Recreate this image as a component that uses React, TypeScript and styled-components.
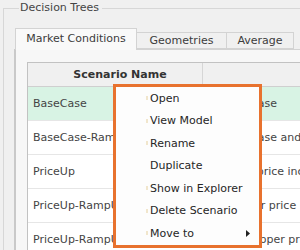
import styled, { createGlobalStyle } from 'styled-components';

const GlobalStyle = createGlobalStyle`
  html, body {
    margin: 0;
    padding: 0;
    background: #f0f0f0;
    overflow: hidden;
  }
  body {
    width: 300px;
    height: 250px;
    font-family: "DejaVu Sans", "Liberation Sans", sans-serif;
    font-size: 10px;
    color: #3a3a3a;
  }
`;

const rows = [
  { name: 'BaseCase', desc: 'Default case', selected: true },
  { name: 'BaseCase-RampUp', desc: 'Default case and ramp up' },
  { name: 'PriceUp', desc: 'Average price increase' },
  { name: 'PriceUp-RampUp', desc: 'Up, higher price' },
  { name: 'PriceUp-RampUp2', desc: 'Ramp, copper price' },
];

const menuItems = [
  { label: 'Open', icon: true },
  { label: 'View Model', icon: true },
  { label: 'Rename', icon: true },
  { label: 'Duplicate' },
  { label: 'Show in Explorer', icon: true },
  { label: 'Delete Scenario', icon: true },
  { label: 'Move to', icon: true, submenu: true },
];

function App() {
  return (
    <Page>
      <GlobalStyle />
      <GroupBox>
        <Legend>Decision Trees</Legend>
        <TabBar>
          <Tab $active>Market Conditions</Tab>
          <Tab $width={91}>Geometries</Tab>
          <Tab $width={68}>Average</Tab>
        </TabBar>
        <Panel>
          <Table>
            <HeaderCell>Scenario Name</HeaderCell>
            <HeaderCell $last />
            {rows.map((r) => (
              <Row key={r.name} $selected={r.selected}>
                <Cell>{r.name}</Cell>
                <Cell>{r.desc}</Cell>
              </Row>
            ))}
          </Table>
        </Panel>
      </GroupBox>

      <Menu>
        {menuItems.map((m) => (
          <MenuItem key={m.label}>
            <IconSlot>{m.icon && <IconMark />}</IconSlot>
            <span>{m.label}</span>
            {m.submenu && (
              <Arrow viewBox="0 0 4 7">
                <path d="M0 0 L4 3.5 L0 7 Z" fill="#222" />
              </Arrow>
            )}
          </MenuItem>
        ))}
      </Menu>
    </Page>
  );
}

export default App;

const Page = styled.div`
  position: relative;
  width: 300px;
  height: 250px;
  overflow: hidden;
`;

const GroupBox = styled.fieldset`
  margin: 0 0 0 3px;
  padding: 0 0 0 10px;
  width: 340px;
  height: 300px;
  border: 1px solid #d7d7d7;
  border-right: none;
  border-bottom: none;
`;

const Legend = styled.legend`
  margin-left: 5px;
  padding: 0 3px 0 1px;
  font-size: 11px;
  line-height: 16px;
  color: #444;
`;

const TabBar = styled.div`
  display: flex;
  align-items: flex-end;
  margin-top: 12px;
  padding-left: 1px;
  position: relative;
  z-index: 1;
`;

const Tab = styled.div<{ $active?: boolean; $width?: number }>`
  box-sizing: border-box;
  width: ${(p) => (p.$active ? 122 : p.$width ?? 80)}px;
  height: ${(p) => (p.$active ? 22 : 17)}px;
  margin-bottom: ${(p) => (p.$active ? -1 : 0)}px;
  border: 1px solid #d3d3d3;
  border-bottom: ${(p) => (p.$active ? 'none' : '1px solid #d3d3d3')};
  margin-left: ${(p) => (p.$active ? 0 : -1)}px;
  background: ${(p) => (p.$active ? '#f9f9f9' : '#f0f0f0')};
  display: flex;
  align-items: center;
  justify-content: center;
  font-size: 11px;
  color: #3c3c3c;
  padding-bottom: ${(p) => (p.$active ? 2 : 0)}px;
`;

const Panel = styled.div`
  box-sizing: border-box;
  height: 260px;
  border-top: 1px solid #d3d3d3;
  border-left: 2px solid #c9c9c9;
  background: #f7f7f7;
  padding: 12px 0 0 11px;
`;

const Table = styled.div`
  display: grid;
  grid-template-columns: 175px 200px;
  grid-auto-rows: 34px;
  grid-template-rows: 24px;
  border: 1px solid #c2c2c2;
  border-right: none;
  background: #fff;
`;

const HeaderCell = styled.div<{ $last?: boolean }>`
  background: #f0f0f0;
  border-bottom: 1px solid #cfcfcf;
  border-right: ${(p) => (p.$last ? 'none' : '1px solid #d6d6d6')};
  display: flex;
  align-items: center;
  justify-content: center;
  padding-left: 10px;
  font-weight: bold;
  font-size: 11px;
  color: #333;
`;

const Row = styled.div<{ $selected?: boolean }>`
  display: contents;
  & > div {
    background: ${(p) => (p.$selected ? '#d8f3e4' : '#fff')};
  }
`;

const Cell = styled.div`
  display: flex;
  align-items: center;
  padding-left: 5px;
  border-bottom: 1px solid #e6e6e6;
  white-space: nowrap;
  overflow: hidden;
  font-size: 11px;
  color: #444;
`;

const Menu = styled.div`
  position: absolute;
  left: 113px;
  top: 84px;
  width: 143px;
  box-sizing: content-box;
  border: 3px solid #e8722e;
  background: #fdfdfd;
  display: flex;
  flex-direction: column;
  height: 158px;
`;

const MenuItem = styled.div`
  display: flex;
  align-items: center;
  height: 22.5px;
  font-size: 11px;
  color: #262626;
  position: relative;
`;

const IconSlot = styled.div`
  width: 34px;
  height: 10px;
  display: flex;
  justify-content: flex-end;
  align-items: center;
`;

const IconMark = styled.div`
  width: 2px;
  height: 4px;
  margin-right: 2px;
  background: #f1e6cc;
`;

const Arrow = styled.svg`
  position: absolute;
  left: 130px;
  width: 4px;
  height: 7px;
`;
